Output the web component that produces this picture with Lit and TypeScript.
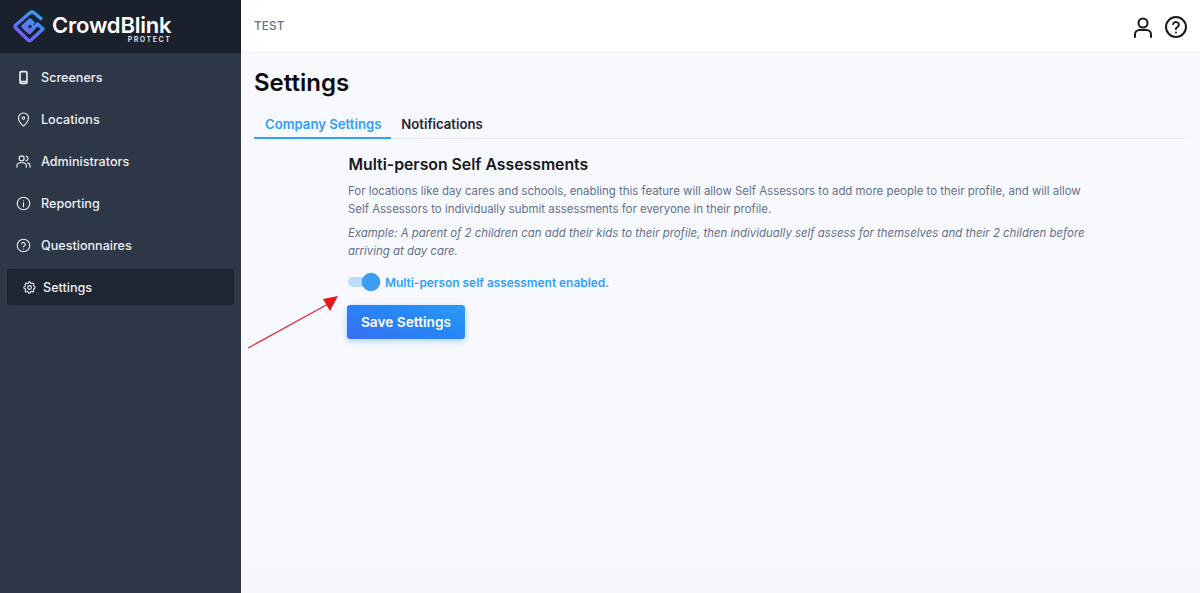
import { LitElement, html, css, svg } from "lit";
import { customElement } from "lit/decorators.js";

const ic = (body: unknown, cls = "nav-ic") => html`<svg class=${cls} viewBox="0 0 24 24" fill="none" stroke="currentColor" stroke-width="2" stroke-linecap="round" stroke-linejoin="round">${body}</svg>`;

const icons = {
  phone: svg`<rect x="6.500" y="2.500" width="11" height="19" rx="2" stroke-width="2.600"/><path d="M8 18.500h8" stroke-width="3"/>`,
  pin: svg`<path d="M12 22.500s8-7 8-13a8 8 0 0 0-16 0c0 6 8 13 8 13z"/><circle cx="12" cy="9.500" r="2"/>`,
  users: svg`<circle cx="9" cy="7" r="4"/><path d="M1.500 21v-2a5 5 0 0 1 5-5h5a5 5 0 0 1 5 5v2"/><path d="M16 3.100a4 4 0 0 1 0 7.800"/><path d="M22.500 21v-2a5 5 0 0 0-3.500-4.800"/>`,
  info: svg`<circle cx="12" cy="12" r="10"/><path d="M12 17v-6M12 7.500h.01"/>`,
  help: svg`<circle cx="12" cy="12" r="10"/><path d="M9.100 9a3 3 0 0 1 5.800 1c0 2-3 2.500-3 4"/><path d="M12 17.500h.01"/>`,
  gear: svg`<path d="M10.300 4.300c.4-1.700 3-1.700 3.400 0a1.700 1.700 0 0 0 2.600 1.100c1.500-.9 3.300.8 2.400 2.400a1.700 1.700 0 0 0 1 2.500c1.800.4 1.800 3 0 3.400a1.700 1.700 0 0 0-1 2.600c.9 1.500-.9 3.300-2.400 2.400a1.700 1.700 0 0 0-2.600 1c-.4 1.800-3 1.800-3.400 0a1.700 1.700 0 0 0-2.600-1c-1.500.9-3.300-.9-2.400-2.400a1.700 1.700 0 0 0-1-2.600c-1.800-.4-1.800-3 0-3.400a1.700 1.700 0 0 0 1-2.500c-.9-1.600.9-3.300 2.400-2.400a1.700 1.700 0 0 0 2.600-1.100z"/><circle cx="12" cy="12" r="3"/>`,
};

@customElement("app-root")
export class AppRoot extends LitElement {
  static styles = css`
    :host { display: block; height: 593px; overflow: hidden; font-family: Inter, "Liberation Sans", sans-serif; }
    .page { display: flex; height: 593px; background: linear-gradient(#f8f9fe 94%, #f5f5fa 100%); position: relative; }
    .side { width: 241px; flex: none; background: #2d3748; color: #f1f3f6; }
    .brand { height: 53px; background: #1a202c; display: flex; align-items: center; padding-left: 13px; gap: 6px; box-sizing: border-box; }
    .logo { width: 33px; height: 33px; flex: none; margin-top: -1px; }
    .word { display: flex; flex-direction: column; color: #fff; margin-top: 4px; }
    .name { font-size: 22px; font-weight: 600; line-height: 22px; letter-spacing: -0.2px; }
    .sub { font-size: 7px; font-weight: 600; letter-spacing: 1.550px; line-height: 7px; text-align: right; color: #e8eaee; }
    nav { display: flex; flex-direction: column; padding: 3px 7px 0; }
    .item { height: 42px; display: flex; align-items: center; font-size: 12.600px; font-weight: 500; padding-left: 9px; gap: 10px; color: #eef0f4; box-sizing: border-box; }
    .item.active { height: 36px; margin-top: 3px; background: #1f2633; border: 1px solid #1a202c; border-radius: 3px; padding-left: 14px; gap: 6px; }
    .nav-ic { width: 15px; height: 15px; flex: none; stroke-width: 1.800; }
    main { flex: 1; display: flex; flex-direction: column; min-width: 0; }
    header { height: 53px; box-sizing: border-box; background: #fff; border-bottom: 1px solid #edf0f6; display: flex; align-items: center; padding: 0 12px 0 13px; }
    .org { font-size: 11.700px; font-weight: 500; color: #64748b; letter-spacing: 0.2px; flex: 1; }
    .tools { display: flex; align-items: center; gap: 9px; color: #1a1a1a; margin-top: 2px; }
    .tool { width: 24px; height: 24px; }
    .body { padding: 15px 14px 0 13px; }
    h1 { margin: 0; font-size: 24px; line-height: 30px; font-weight: 600; color: #0b0b0f; }
    .tabs { display: flex; margin-top: 14px; border-bottom: 1px solid #e5e8ee; height: 27px; box-sizing: border-box; }
    .tab { padding: 3px 10px 0; font-size: 13.150px; font-weight: 600; color: #1f2633; line-height: 18px; height: 27px; box-sizing: border-box; }
    .tab.on { color: #2ea1fb; border-bottom: 2px solid #2ea1fb; padding-left: 11px; }
    .content { padding: 16px 0 0 94px; width: 745px; }
    h2 { margin: 0 0 0 0.500px; font-size: 15.800px; line-height: 20px; font-weight: 600; color: #15171c; }
    p { margin: 7px 0 0; font-size: 11.430px; line-height: 18px; color: #64708a; }
    p.em { font-style: italic; margin-top: 6px; }
    .toggle-row { display: flex; align-items: center; gap: 5px; margin-top: 13px; height: 18px; }
    .toggle { width: 32px; height: 18px; position: relative; flex: none; }
    .track { position: absolute; left: 0; top: 4px; width: 28px; height: 10px; border-radius: 5px; background: #b9dcf8; }
    .knob { position: absolute; right: 0; top: 0; width: 18px; height: 18px; border-radius: 50%; background: #3b9ef5; box-shadow: 0 0 1px #2f7fc7; }
    .label { font-size: 11.900px; font-weight: 600; color: #2ea1fb; }
    button { display: block; margin: 14px 0 0 -1px; width: 118px; height: 34px; border: 0; border-radius: 3px; color: #fff; font: 600 13.700px Inter, "Liberation Sans", sans-serif; background: linear-gradient(20deg, #3a6ff5 0%, #2588f5 60%, #2e9bf8 100%); box-shadow: 0 2px 6px rgba(46, 150, 250, 0.4); }
    .arrow { position: absolute; left: 240px; top: 290px; width: 110px; height: 60px; pointer-events: none; }
  `;

  render() {
    return html`
      <div class="page">
        <aside class="side">
          <div class="brand">
            <svg class="logo" viewBox="0 0 33 33" fill="none">
              <defs>
                <linearGradient id="lg" x1="0.8" y1="0" x2="0.2" y2="1">
                  <stop offset="0" stop-color="#2f9cf7"/><stop offset="1" stop-color="#7a5cf0"/>
                </linearGradient>
              </defs>
              <path d="M29 9.500 L21 2.800 Q19 1.400 17 2.800 L2.800 15 Q1 16.500 2.800 18 L15 30 Q16.500 31.300 18 30 L30 19 L24.500 14 L16.500 22.500 L10 16.500 L17 10 L21 14" stroke="url(#lg)" stroke-width="3.400" stroke-linejoin="round"/>
              <path d="M17 13 L20.500 16.500 L17 20 L13.500 16.500 Z" stroke="url(#lg)" stroke-width="2"/>
            </svg>
            <div class="word">
              <span class="name">CrowdBlink</span>
              <span class="sub">PROTECT</span>
            </div>
          </div>
          <nav>
            <div class="item">${ic(icons.phone)}Screeners</div>
            <div class="item">${ic(icons.pin)}Locations</div>
            <div class="item">${ic(icons.users)}Administrators</div>
            <div class="item">${ic(icons.info)}Reporting</div>
            <div class="item">${ic(icons.help)}Questionnaires</div>
            <div class="item active">${ic(icons.gear)}Settings</div>
          </nav>
        </aside>
        <main>
          <header>
            <span class="org">TEST</span>
            <div class="tools">
              ${ic(svg`<circle cx="12" cy="8" r="4.500"/><path d="M4 22v-2.500a4.500 4.500 0 0 1 4.500-4.500h7a4.500 4.500 0 0 1 4.500 4.500V22"/>`, "tool")}
              ${ic(svg`<circle cx="12" cy="12" r="10"/><path d="M9.100 9a3 3 0 0 1 5.800 1c0 2-3 2.500-3 4"/><path d="M12 17.500h.01"/>`, "tool")}
            </div>
          </header>
          <div class="body">
            <h1>Settings</h1>
            <div class="tabs">
              <div class="tab on">Company Settings</div>
              <div class="tab">Notifications</div>
            </div>
            <div class="content">
              <h2>Multi-person Self Assessments</h2>
              <p>For locations like day cares and schools, enabling this feature will allow Self Assessors to add more people to their profile, and will allow Self Assessors to individually submit assessments for everyone in their profile.</p>
              <p class="em">Example: A parent of 2 children can add their kids to their profile, then individually self assess for themselves and their 2 children before arriving at day care.</p>
              <div class="toggle-row">
                <div class="toggle"><span class="track"></span><span class="knob"></span></div>
                <span class="label">Multi-person self assessment enabled.</span>
              </div>
              <button>Save Settings</button>
            </div>
          </div>
        </main>
        <svg class="arrow" viewBox="0 0 110 60" fill="none">
          <path d="M8 58 L88 14" stroke="#e8232a" stroke-width="1.200"/>
          <path d="M98 6 L83 9 L90 21 Z" fill="#e8151c"/>
        </svg>
      </div>
    `;
  }
}
